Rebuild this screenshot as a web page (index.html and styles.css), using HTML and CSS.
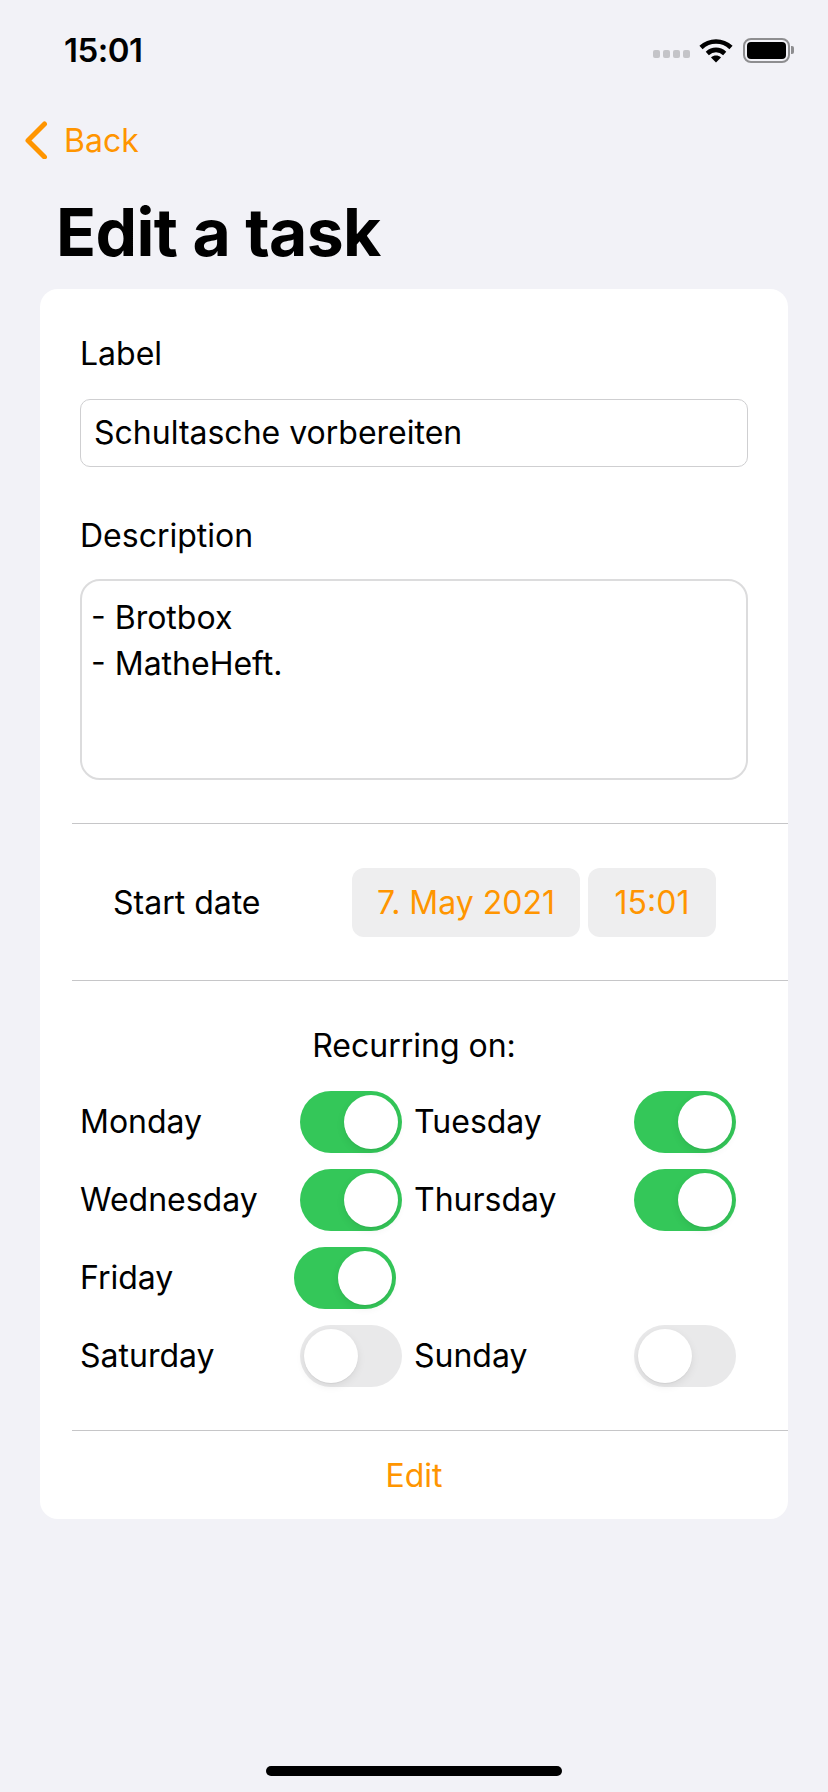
FILE: index.html
```html
<!DOCTYPE html>
<html lang="en">
<head>
  <meta charset="UTF-8">
  <title>Edit a task</title>
  <link rel="stylesheet" href="styles.css">
</head>
<body>

<div class="status-bar">
  <span class="clock">15:01</span>
  <div class="status-icons">
    <div class="signal"><i></i><i></i><i></i><i></i></div>
    <svg class="wifi" width="34" height="25" viewBox="0 0 34 25">
      <path d="M2 9.5C10.500 1.500 23.500 1.500 32 9.500" fill="none" stroke="#000" stroke-width="4.600"/>
      <path d="M8.300 15.500C13.500 10.700 20.500 10.700 25.700 15.500" fill="none" stroke="#000" stroke-width="4.600"/>
      <path d="M12 19.500C15 16.900 19 16.900 22 19.500L17 24.500Z" fill="#000"/>
    </svg>
    <div class="battery"><div class="battery-level"></div></div>
    <div class="battery-nub"></div>
  </div>
</div>

<nav class="nav-bar">
  <svg class="chevron" width="24" height="38" viewBox="0 0 24 38">
    <path d="M20.500 3L4 19.500L20.500 36" fill="none" stroke="#ff9500" stroke-width="5" stroke-linecap="round" stroke-linejoin="round"/>
  </svg>
  <span class="back">Back</span>
</nav>

<h1>Edit a task</h1>

<main class="card">
  <section class="fields">
    <div class="field-label">Label</div>
    <div class="text-input">Schultasche vorbereiten</div>
    <div class="field-label second">Description</div>
    <div class="text-area">- Brotbox<br>- MatheHeft.</div>
  </section>

  <section class="date-row">
    <span class="date-label">Start date</span>
    <span class="pill pill-date">7. May 2021</span>
    <span class="pill pill-time">15:01</span>
  </section>

  <section class="recurring">
    <div class="recurring-title">Recurring on:</div>
    <div class="days">
      <div class="day"><span>Monday</span><div class="toggle on"></div></div>
      <div class="day"><span>Tuesday</span><div class="toggle on"></div></div>
      <div class="day"><span>Wednesday</span><div class="toggle on"></div></div>
      <div class="day"><span>Thursday</span><div class="toggle on"></div></div>
      <div class="day tight"><span>Friday</span><div class="toggle on"></div></div>
      <div class="day empty"></div>
      <div class="day"><span>Saturday</span><div class="toggle"></div></div>
      <div class="day"><span>Sunday</span><div class="toggle"></div></div>
    </div>
  </section>

  <section class="edit-row">Edit</section>
</main>

<div class="home-bar"></div>

</body>
</html>
```

FILE: styles.css
```css
body {
  font-family: Inter, "Liberation Sans", sans-serif;
  background: #f2f2f7;
  color: #000;
  margin: 0;
  padding: 0;
  width: 828px;
  height: 1792px;
  position: relative;
  overflow: hidden;
}

.status-bar {
  display: flex;
  justify-content: space-between;
  align-items: center;
  height: 50px;
  padding: 25px 34px 0 64px;
}

.clock {
  font-size: 33px;
  font-weight: 600;
  letter-spacing: -0.5px;
  line-height: 50px;
}

.status-icons {
  display: flex;
  align-items: center;
}

.signal {
  display: flex;
  gap: 2.500px;
  margin: 8px 9px 0 0;
}

.signal i {
  width: 7.500px;
  height: 7.500px;
  border-radius: 2px;
  background: #c4c4c8;
}

.wifi {
  margin-right: 10px;
}

.battery {
  box-sizing: border-box;
  width: 47px;
  height: 25px;
  border: 2px solid #8e8e90;
  border-radius: 8px;
  padding: 2px;
}

.battery-level {
  height: 100%;
  background: #000;
  border-radius: 4px;
}

.battery-nub {
  width: 3px;
  height: 8px;
  background: #8e8e90;
  border-radius: 0 2px 2px 0;
  margin-left: 1px;
}

.nav-bar {
  display: flex;
  align-items: center;
  height: 38px;
  margin-top: 46px;
  padding-left: 24px;
  color: #ff9500;
}

.chevron {
  margin-right: 16px;
}

.back {
  font-size: 32px;
}

h1 {
  margin: 37px 0 0 56px;
  font-size: 66px;
  font-weight: 700;
  line-height: 72px;
  letter-spacing: -0.6px;
}

.card {
  box-sizing: border-box;
  width: 748px;
  height: 1230px;
  margin: 21px 0 0 40px;
  background: #fff;
  border-radius: 18px;
  padding-left: 32px;
}

.fields {
  height: 535px;
  padding: 45px 0 0 8px;
  box-sizing: border-box;
  border-bottom: 1px solid #c6c6c8;
}

.field-label {
  font-size: 32px;
  line-height: 40px;
}

.field-label.second {
  margin-top: 49px;
}

.text-input {
  box-sizing: border-box;
  width: 668px;
  height: 68px;
  margin-top: 25px;
  padding-left: 13px;
  border: 1px solid #cfcfd1;
  border-radius: 10px;
  font-size: 32px;
  line-height: 66px;
}

.text-area {
  box-sizing: border-box;
  width: 668px;
  height: 201px;
  margin-top: 23px;
  padding: 14px 0 0 9px;
  border: 2px solid #dcdcdd;
  border-radius: 20px;
  font-size: 32px;
  line-height: 46px;
}

.date-row {
  box-sizing: border-box;
  display: flex;
  align-items: center;
  height: 157px;
  padding-left: 41px;
  border-bottom: 1px solid #c6c6c8;
  font-size: 32px;
}

.date-label {
  width: 239px;
}

.pill {
  display: flex;
  align-items: center;
  justify-content: center;
  height: 69px;
  background: #eeeeef;
  border-radius: 12px;
  color: #ff9500;
}

.pill-date {
  width: 228px;
  margin-right: 8px;
}

.pill-time {
  width: 128px;
}

.recurring {
  box-sizing: border-box;
  height: 450px;
  padding: 45px 0 0 8px;
  border-bottom: 1px solid #c6c6c8;
}

.recurring-title {
  width: 668px;
  text-align: center;
  font-size: 32px;
  line-height: 40px;
}

.days {
  display: grid;
  grid-template-columns: 322px 322px;
  column-gap: 12px;
  row-gap: 16px;
  margin-top: 25px;
}

.day {
  display: flex;
  justify-content: space-between;
  align-items: center;
  height: 62px;
  font-size: 32px;
}

.day span {
  margin-top: -2px;
}

.day.tight {
  padding-right: 6px;
}

.toggle {
  box-sizing: border-box;
  position: relative;
  width: 102px;
  height: 62px;
  border-radius: 31px;
  background: #e9e9ea;
}

.toggle.on {
  background: #34c759;
}

.toggle::after {
  content: "";
  position: absolute;
  top: 4px;
  left: 4px;
  width: 54px;
  height: 54px;
  border-radius: 50%;
  background: #fff;
  box-shadow: 0 3px 8px rgba(0,0,0,0.08), 0 1px 1px rgba(0,0,0,0.05);
}

.toggle.on::after {
  left: 44px;
}

.edit-row {
  display: flex;
  align-items: center;
  justify-content: center;
  height: 88px;
  margin-right: 32px;
  color: #ff9500;
  font-size: 32px;
}

.home-bar {
  position: absolute;
  left: 266px;
  bottom: 16px;
  width: 296px;
  height: 10px;
  border-radius: 5px;
  background: #000;
}
```
